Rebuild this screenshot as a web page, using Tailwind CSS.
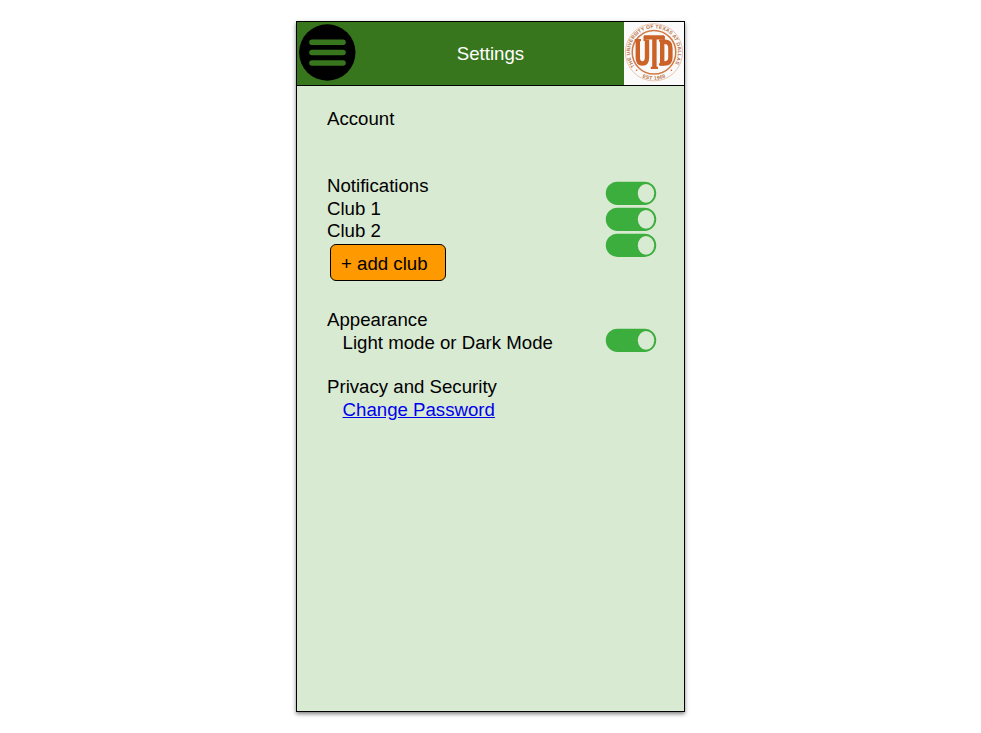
<!DOCTYPE html>
<html lang="en">
<head>
<meta charset="utf-8">
<title>Settings</title>
<script src="https://cdn.jsdelivr.net/npm/@tailwindcss/browser@4"></script>
</head>
<body class="h-[733px] overflow-hidden bg-white pl-[296px] pt-[21px] font-['Liberation_Sans',Arial,sans-serif] text-[18.65px] leading-[22.4px] text-black">
<svg class="hidden" aria-hidden="true">
  <symbol id="toggle" viewBox="0 0 52 24">
    <rect x="0.8" y="0.7" width="50.4" height="23.2" rx="11.6" fill="#3cae3d"/>
    <ellipse cx="41" cy="12.3" rx="8.2" ry="9.4" fill="#d9ead3"/>
  </symbol>
</svg>
<div class="flex h-[691px] w-[389px] flex-col border border-black bg-[#d9ead3] shadow-[0_2px_4px_rgba(0,0,0,0.5)]">
  <header class="flex h-[64px] shrink-0 items-stretch justify-between border-b border-black bg-[#38761d]">
    <button class="w-[60px]" aria-label="Menu">
      <svg class="block h-[63px] w-[60px]" viewBox="0 0 60 63">
        <circle cx="30.3" cy="30.5" r="28.2" fill="#000"/>
        <path d="M15 20.2H46M15 30.5H46M15 41H46" stroke="#38761d" stroke-width="5.6" stroke-linecap="round"/>
      </svg>
    </button>
    <h1 class="flex items-center pt-[2px] text-white">Settings</h1>
    <svg class="block h-[63px] w-[60px] bg-[#fafafa]" viewBox="0 0 60 63">
      <defs>
        <path id="arcTop" d="M11.3 45.2A24 24 0 1 1 48.7 45.2"/>
        <path id="arcBottom" d="M14.8 53.2A27.5 27.5 0 0 0 45.2 53.2"/>
      </defs>
      <g fill="none" stroke="#d27a46">
        <circle cx="30" cy="30.3" r="28.6" stroke-width="0.7" opacity="0.6"/>
        <circle cx="30" cy="30.3" r="21.8" stroke-width="1.5"/>
      </g>
      <g fill="#b8703f" font-size="5" font-weight="bold">
        <text><textPath href="#arcTop" startOffset="1" textLength="102">THE UNIVERSITY OF TEXAS AT DALLAS</textPath></text>
        <text><textPath href="#arcBottom" startOffset="4" textLength="24">EST 1969</textPath></text>
      </g>
      <circle cx="12.6" cy="48.2" r="0.8" fill="#c9622c"/>
      <circle cx="47.4" cy="48.2" r="0.8" fill="#c9622c"/>
      <g fill="none" stroke="#cc6228">
        <g stroke-width="4.4">
          <path d="M13.8 17.5V35.5Q13.8 41.5 18.4 41.5Q23 41.5 23 35.5V17.5"/>
          <path d="M20 15.4H40M30.4 14V46"/>
          <path d="M38.2 19.8H40.6Q46.4 19.8 46.4 26V35.5Q46.4 41.5 40.6 41.5H38.2ZM38.2 19V42"/>
        </g>
        <path d="M10.8 18.2H17M20.6 14V19M39.8 14V19M26.8 45.8H34M35 18.6H40M35 42.4H40" stroke-width="2.2"/>
      </g>
    </svg>
  </header>
  <main class="flex items-start justify-between pl-[30px] pr-[27.5px] pt-[22px]">
    <div class="whitespace-nowrap">
      <h2>Account</h2>
      <section class="mt-[44.8px] h-[134.1px]">
        <h2>Notifications</h2>
        <p>Club 1</p>
        <p>Club 2</p>
        <button class="ml-[3px] mt-[1.8px] flex h-[37px] w-[116px] items-center rounded-[6px] border border-black bg-[#ff9900] pl-[10px] pt-[3px]">+ add club</button>
      </section>
      <section>
        <h2>Appearance</h2>
        <p class="pl-[15.6px]">Light mode or Dark Mode</p>
      </section>
      <section class="mt-[22.3px]">
        <h2>Privacy and Security</h2>
        <a href="#" class="ml-[15.6px] block text-[#0000ee] underline">Change Password</a>
      </section>
    </div>
    <div class="flex flex-col gap-[2px] pt-[73.4px]">
      <svg class="h-[24px] w-[52px]"><use href="#toggle"/></svg>
      <svg class="h-[24px] w-[52px]"><use href="#toggle"/></svg>
      <svg class="h-[24px] w-[52px]"><use href="#toggle"/></svg>
      <svg class="mt-[69px] h-[24px] w-[52px]"><use href="#toggle"/></svg>
    </div>
  </main>
</div>
</body>
</html>
